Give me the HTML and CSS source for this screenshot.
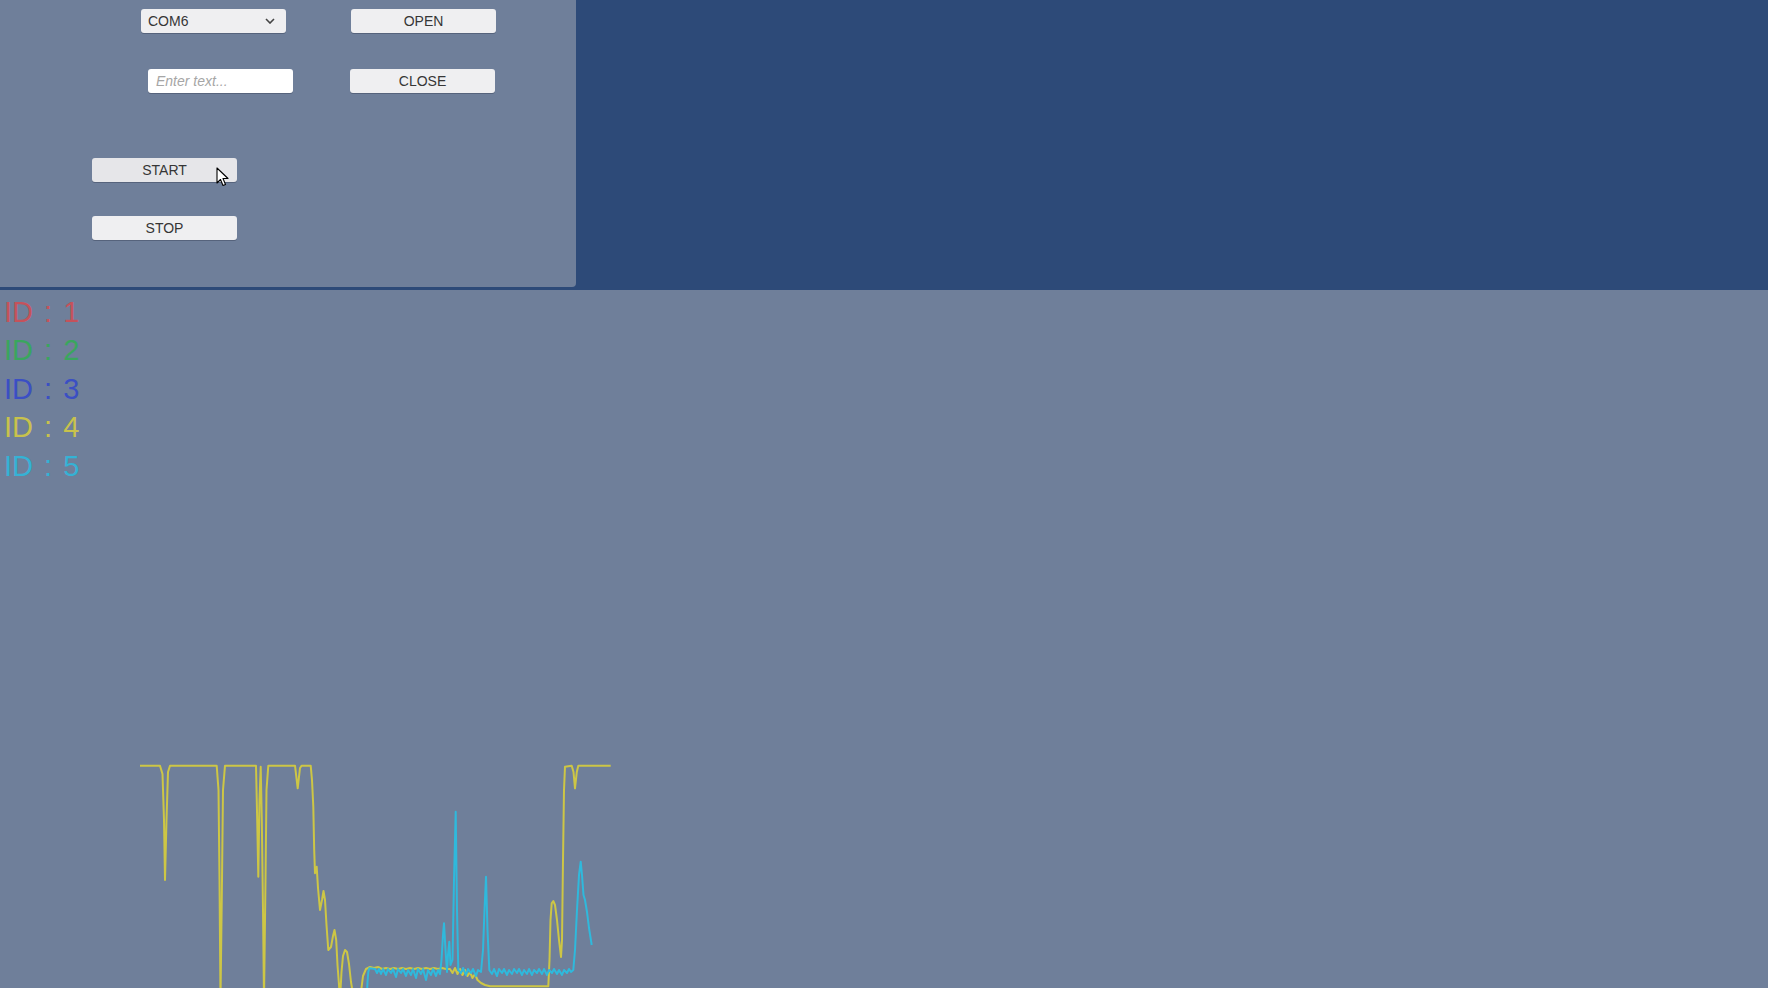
FILE: index.html
```html
<!DOCTYPE html>
<html lang="en">
<head>
<meta charset="utf-8">
<title>Serial Monitor</title>
<link rel="stylesheet" href="styles.css">
</head>
<body>
<div class="top">
  <div class="panel">
    <div class="row row1">
      <div class="dropdown"><span>COM6</span>
        <svg class="chev" width="10" height="6" viewBox="0 0 10 6"><path d="M1 1 L5 5 L9 1" fill="none" stroke="#444" stroke-width="1.6"/></svg>
      </div>
      <button class="btn open">OPEN</button>
    </div>
    <div class="row row2">
      <div class="input"><span class="ph">Enter text...</span></div>
      <button class="btn close">CLOSE</button>
    </div>
    <div class="row row3">
      <button class="btn start">START</button>
    </div>
    <div class="row row4">
      <button class="btn stop">STOP</button>
    </div>
    <svg class="cursor" width="14" height="21" viewBox="0 0 14 21"><path d="M1 1 L1 16 L4.5 12.5 L7 18.5 L9.5 17.5 L7 11.5 L12 11.5 Z" fill="#fff" stroke="#000" stroke-width="1.1" stroke-linejoin="round"/></svg>
  </div>
  <div class="blue"></div>
</div>
<div class="bottom">
  <ul class="ids">
    <li class="id1">ID : 1</li>
    <li class="id2">ID : 2</li>
    <li class="id3">ID : 3</li>
    <li class="id4">ID : 4</li>
    <li class="id5">ID : 5</li>
  </ul>
  <svg class="chart" width="640" height="240" viewBox="0 0 640 240">
    <path class="yl" d="M140,5.7 L160,5.7 L162.5,14 L164,60 L165,120 L166.5,60 L168,12 L170,5.7 L216.7,5.7 L218.5,30 L219.5,120 L220.5,240 L222,120 L223,30 L225,5.7 L256,5.7 L257.2,60 L258.3,116.7 L259.5,40 L260.7,6.7 L261.8,60 L263,150 L264,240 L265.5,120 L266.5,30 L268.3,5.7 L295,5.7 L297.7,28.3 L300,8 L301.7,5.7 L310.7,5.7 L312,20 L313.3,46.7 L314.2,90 L315,113.3 L316.7,106.7 L318,128 L320,150 L322,140 L323.5,131 L325,140 L326.5,165 L328.3,190 L331,187 L333,176 L334.5,170 L336.2,180 L337.5,205 L339,225 L340,240 L341.5,212 L343,196 L345,190 L347,192 L349,204 L351,222 L353,234 L355,240 L358,240 L361,232 L363,216 L366,209 L370,207 L374,208 L378,207 L382,209 L386,208 L390,209 L394,208 L398,209 L402,208 L406,209 L410,208 L414,209 L418,208 L422,209 L426,208 L430,209 L434,208 L438,209 L442,208 L446,209 L450,209 L452.5,213 L455,208 L457.5,214 L460,209 L462.5,215 L465,210 L467.5,216 L470,212 L472.5,218 L475,214 L477.5,220 L481,223 L485,225 L490,226.3 L548.3,226.3 L549.5,200 L550.5,160 L551.7,143.3 L553.3,141 L555,145 L557,160 L559,180 L561,197 L562,180 L563,100 L564,30 L565,6.7 L571.7,5.7 L573.5,12 L575,28.3 L576.8,12 L578.3,5.7 L610.7,5.7"/>
    <path class="cy" d="M366.7,240 L367.5,222 L368.3,212 L369.3,208.3 L372,208.5 L375,209 L377,213 L379,209 L381,214 L383,209 L386,215 L388,209 L391,213 L393,209 L396,217 L398,209 L401,213 L403,209 L406,216 L408,210 L411,215 L413,209 L416,218 L418,209 L421,214 L423,209 L426,220 L428,210 L431,215 L433,209 L436,216 L438,210 L440,214 L441.5,200 L443,175 L444,163.3 L445.5,190 L447,212 L448,195 L449.3,181.7 L450.5,205 L452.5,200 L454,120 L455.7,51.7 L457,150 L458.3,210 L461,213 L463,208 L466,215 L468,209 L471,213 L473,209 L476,216 L478,210 L481,212 L483,190 L484.5,150 L486,116.7 L487.5,170 L489.3,210 L492,214 L494,209 L497,216 L499,209 L502,213 L504,209 L507,215 L509,210 L512,214 L514,209 L517,213 L519,209 L522,215 L524,210 L527,214 L529,209 L532,215 L534,210 L537,213 L539,209 L542,214 L544,209 L547,215 L549,210 L552,213 L554,209 L557,214 L559,210 L562,215 L564,210 L567,213 L569,209 L571,212 L573.3,210 L575,190 L577,150 L579,115 L580.7,101.7 L582,115 L583.5,135 L585,140 L587,152 L589,168 L591.7,185"/>
  </svg>
</div>
</body>
</html>
```
FILE: styles.css
```css
* { box-sizing: border-box; }
html, body {
  margin: 0;
  padding: 0;
  width: 1768px;
  height: 988px;
  overflow: hidden;
  background: #6f7f9a;
  font-family: "Liberation Sans", Arial, sans-serif;
}
.top {
  display: flex;
  height: 290px;
  background: #2d4a78;
}
.panel {
  position: relative;
  width: 576px;
  height: 287px;
  background: #6f7f9a;
  border-radius: 0 0 4px 0;
  display: flex;
  flex-direction: column;
}
.blue { flex: 1; }
.row { display: flex; align-items: center; }
.row1 { margin-top: 9px; padding-left: 141px; gap: 65px; }
.row2 { margin-top: 36px; padding-left: 148px; gap: 57px; }
.row3 { margin-top: 65px; padding-left: 92px; }
.row4 { margin-top: 34px; padding-left: 92px; }

.btn, .dropdown, .input {
  width: 145px;
  height: 24px;
  border: none;
  border-radius: 3px;
  background: #efeff1;
  box-shadow: 0 1px 0 rgba(40, 50, 70, 0.35);
  font-family: "Liberation Sans", Arial, sans-serif;
  font-size: 14px;
  color: #363636;
  padding: 0;
}
.btn { display: flex; align-items: center; justify-content: center; }
.start { background: #e6e6e9; }
.dropdown {
  display: flex;
  align-items: center;
  justify-content: space-between;
  padding: 0 11px 0 7px;
}
.chev { display: block; }
.input {
  background: #fff;
  display: flex;
  align-items: center;
  padding-left: 8px;
}
.ph { color: #a6a6a6; font-style: italic; font-size: 14px; }
.cursor {
  position: absolute;
  left: 216px;
  top: 167px;
}

.bottom { position: relative; }
.ids {
  list-style: none;
  margin: 3px 0 0;
  padding: 0 0 0 4px;
  font-size: 29px;
  line-height: 38.4px;
  word-spacing: 3px;
}
.id1 { color: #c5525b; }
.id2 { color: #3aa65e; }
.id3 { color: #3b4fc4; }
.id4 { color: #c8c24c; }
.id5 { color: #35b2d5; }
.chart {
  display: block;
  margin-top: 275px;
}
.chart path { fill: none; stroke-width: 2; stroke-linejoin: round; }
.yl { stroke: #cdc645; }
.cy { stroke: #2fb9dc; }
```
